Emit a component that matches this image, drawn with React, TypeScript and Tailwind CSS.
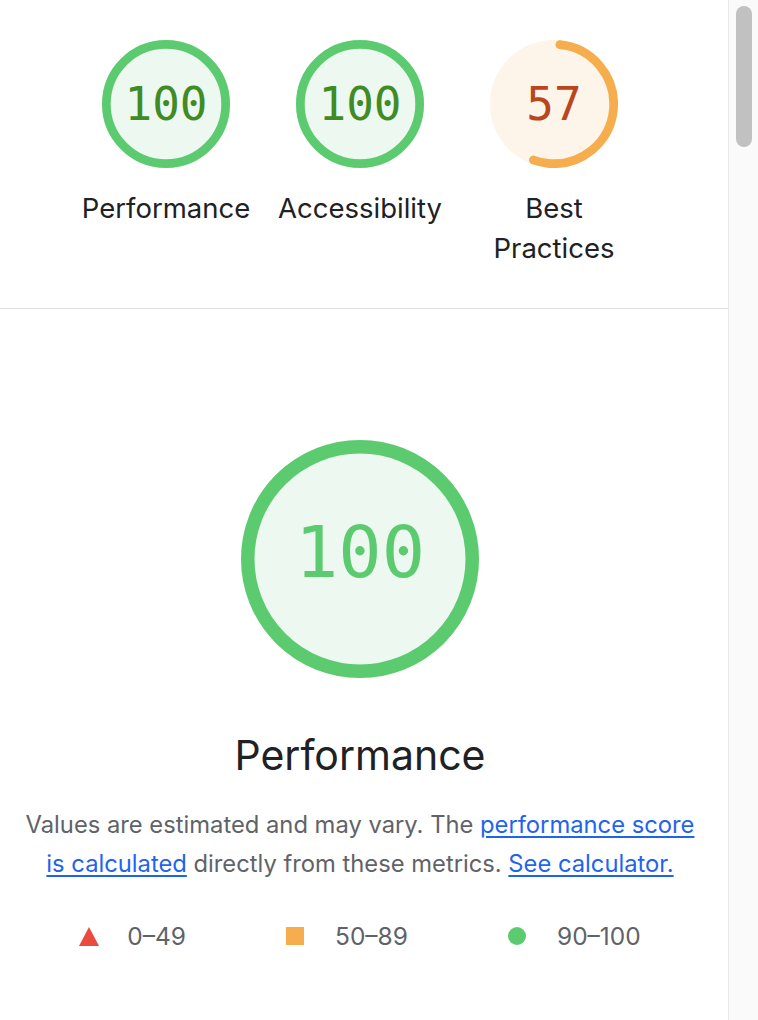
import React from "react";

type GaugeProps = {
  size: number;
  stroke: number;
  frac: number;
  startDeg?: number;
  color: string;
  fill: string;
};

function GaugeRing({ size, stroke, frac, startDeg = 0, color, fill }: GaugeProps) {
  const r = (size - stroke) / 2;
  const c = 2 * Math.PI * r;
  const cx = size / 2;
  return (
    <svg width={size} height={size} viewBox={`0 0 ${size} ${size}`} className="block">
      <circle cx={cx} cy={cx} r={r} fill={fill} stroke={fill} strokeWidth={stroke} />
      <circle
        cx={cx}
        cy={cx}
        r={r}
        fill="none"
        stroke={color}
        strokeWidth={stroke}
        strokeLinecap={frac >= 1 ? "butt" : "round"}
        strokeDasharray={frac >= 1 ? undefined : `${frac * c} ${c}`}
        transform={`rotate(${-90 + startDeg} ${cx} ${cx})`}
      />
    </svg>
  );
}

const GREEN = "#5ccb70";
const GREEN_FILL = "#edf8f0";
const ORANGE = "#f5ad4e";
const ORANGE_FILL = "#fdf4ea";

function SmallGauge({
  value,
  label,
  frac,
  startDeg,
  color,
  fill,
  textClass,
}: {
  value: string;
  label: React.ReactNode;
  frac: number;
  startDeg?: number;
  color: string;
  fill: string;
  textClass: string;
}) {
  return (
    <div className="flex w-[194px] flex-col items-center">
      <div className="relative h-[128px] w-[128px]">
        <GaugeRing size={128} stroke={8.7} frac={frac} startDeg={startDeg} color={color} fill={fill} />
        <div
          className={`absolute inset-0 flex items-center justify-center font-['DejaVu_Sans_Mono',monospace] text-[46px] leading-none slashed-zero ${textClass}`}
        >
          {value}
        </div>
      </div>
      <div className="mt-5 text-center font-['Inter',sans-serif] text-[27.5px] leading-[40px] text-[#202124]">
        {label}
      </div>
    </div>
  );
}

export default function App() {
  return (
    <div className="flex h-[1020px] w-[758px] overflow-hidden bg-white">
      <main className="w-[728px] shrink-0">
        <section className="flex justify-center border-b border-[#e0e0e0] pr-2 pt-10 pb-10">
          <SmallGauge value="100" label="Performance" frac={1} color={GREEN} fill={GREEN_FILL} textClass="text-[#3f8b24]" />
          <SmallGauge value="100" label="Accessibility" frac={1} color={GREEN} fill={GREEN_FILL} textClass="text-[#3f8b24]" />
          <SmallGauge
            value="57"
            label={
              <>
                Best
                <br />
                Practices
              </>
            }
            frac={0.54}
            startDeg={5.6}
            color={ORANGE}
            fill={ORANGE_FILL}
            textClass="text-[#b9461c]"
          />
        </section>

        <section className="flex flex-col items-center pr-2 pt-[131px]">
          <div className="relative h-[238px] w-[238px]">
            <GaugeRing size={238} stroke={13.5} frac={1} color={GREEN} fill={GREEN_FILL} />
            <div className="absolute inset-0 flex items-center justify-center pb-[14px] font-['DejaVu_Sans_Mono',monospace] text-[72px] leading-none text-[#5ccb70] slashed-zero">
              100
            </div>
          </div>

          <h2 className="mt-[53px] font-['Inter',sans-serif] text-[41px] font-normal leading-[48px] text-[#202124]">
            Performance
          </h2>

          <p className="mt-[26px] w-[678px] text-center font-['Inter',sans-serif] text-[23.75px] leading-[39px] text-[#5f6368]">
            Values are estimated and may vary. The{" "}
            <a className="text-[#1f64ef] underline underline-offset-[3px]" href="#">
              performance score is calculated
            </a>{" "}
            directly from these metrics.{" "}
            <a className="text-[#1f64ef] underline underline-offset-[3px]" href="#">
              See calculator.
            </a>
          </p>

          <div className="mt-[38px] flex items-center justify-center gap-[100px] font-['Inter',sans-serif] text-[24.5px] leading-[30px] text-[#5f6368]">
            <div className="flex items-center gap-7">
              <svg width="20" height="19" viewBox="0 0 20 19" className="block">
                <polygon points="10,0 20,19 0,19" fill="#eb4a3f" />
              </svg>
              <span>0–49</span>
            </div>
            <div className="flex items-center gap-[31px]">
              <div className="h-[18px] w-[18px] bg-[#f5ad4e]" />
              <span>50–89</span>
            </div>
            <div className="flex items-center gap-[31px]">
              <div className="h-[18px] w-[18px] rounded-full bg-[#5ccb70]" />
              <span>90–100</span>
            </div>
          </div>
        </section>
      </main>

      <div className="w-[30px] shrink-0 border-l border-[#e8e8e8] bg-[#fafafa] pl-[7px] pt-[6px]">
        <div className="h-[141px] w-4 rounded-full bg-[#c1c1c1]" />
      </div>
    </div>
  );
}
